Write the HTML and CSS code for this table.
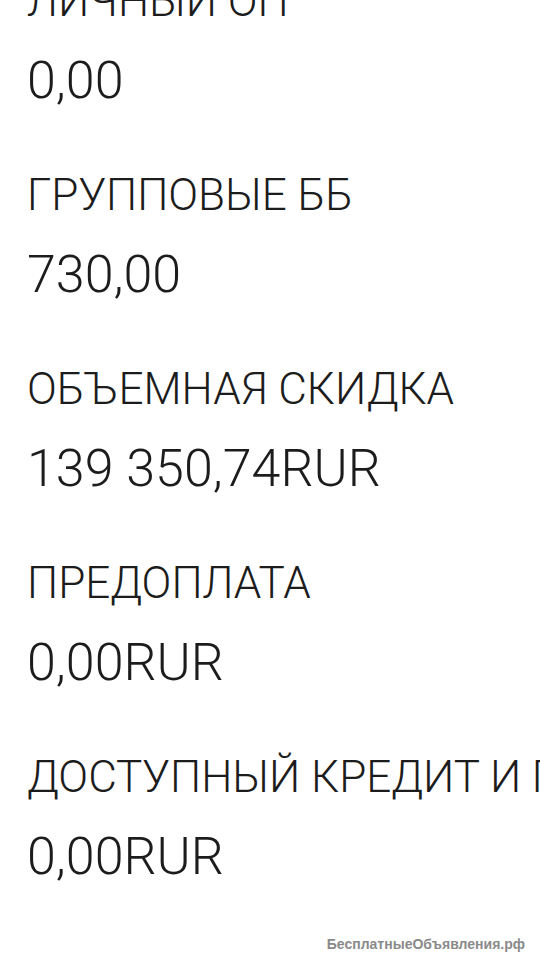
FILE: index.html
```html
<!DOCTYPE html>
<html lang="ru">
<head>
<meta charset="utf-8">
<link rel="stylesheet" href="styles.css">
</head>
<body>
<div class="list">
  <div class="item"><div class="label">ЛИЧНЫЙ ОП</div><div class="value">0,00</div></div>
  <div class="item"><div class="label">ГРУППОВЫЕ ББ</div><div class="value">730,00</div></div>
  <div class="item"><div class="label">ОБЪЕМНАЯ СКИДКА</div><div class="value">139 350,74RUR</div></div>
  <div class="item"><div class="label">ПРЕДОПЛАТА</div><div class="value">0,00RUR</div></div>
  <div class="item"><div class="label">ДОСТУПНЫЙ КРЕДИТ И ПРЕДОПЛАТА</div><div class="value">0,00RUR</div></div>
</div>
<div class="watermark">БесплатныеОбъявления.рф</div>
</body>
</html>
```
FILE: styles.css
```css
html, body {
  margin: 0;
  padding: 0;
  background: #fff;
  overflow: hidden;
  width: 540px;
  height: 960px;
}
body {
  position: relative;
  font-family: Roboto, "Noto Sans", sans-serif;
  color: #1c1c1c;
}
.list {
  display: flex;
  flex-direction: column;
  gap: 34px;
  padding-left: 27px;
  margin-top: -39px;
}
.label {
  font-size: 44px;
  font-weight: 300;
  line-height: 80px;
  white-space: nowrap;
}
.value {
  font-size: 52px;
  font-weight: 300;
  line-height: 80px;
  white-space: nowrap;
}
.watermark {
  position: absolute;
  right: 15px;
  bottom: 8px;
  font-family: "Liberation Sans", Arial, sans-serif;
  font-weight: bold;
  font-size: 14px;
  color: #8a8a8a;
}
```
